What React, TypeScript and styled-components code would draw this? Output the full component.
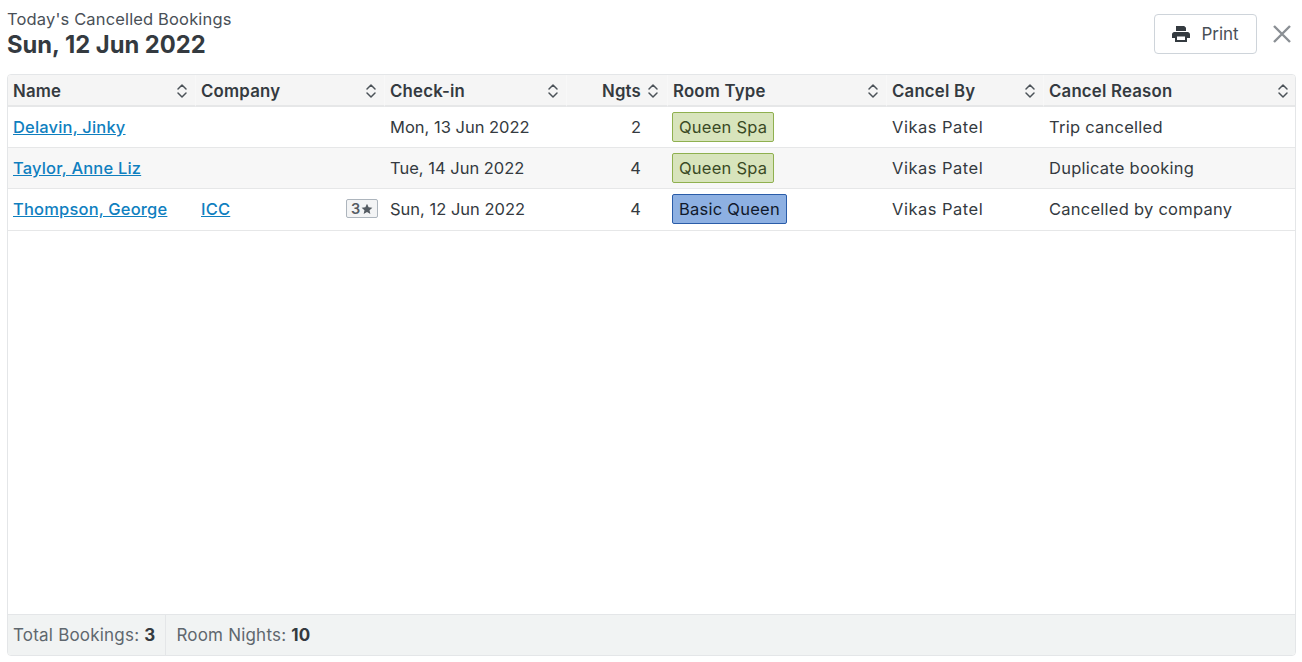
import React from "react";
import styled, { createGlobalStyle } from "styled-components";

const GlobalStyle = createGlobalStyle`
  html, body {
    margin: 0;
    padding: 0;
    background: #fff;
    font-family: Inter, "Liberation Sans", sans-serif;
    color: #343a40;
  }
`;

const Page = styled.div`
  width: 1302px;
  height: 662px;
  box-sizing: border-box;
  padding: 9px 6px 6px 7px;
  display: flex;
  flex-direction: column;
  overflow: hidden;
`;

const Header = styled.header`
  display: flex;
  justify-content: space-between;
  align-items: flex-start;
  height: 65px;
  flex: none;
`;

const Titles = styled.div`
  display: flex;
  flex-direction: column;
`;

const Subtitle = styled.div`
  font-size: 16.5px;
  letter-spacing: 0.15px;
  line-height: 20px;
  color: #495057;
`;

const Title = styled.h1`
  margin: 1px 0 0;
  font-size: 23.75px;
  line-height: 30px;
  font-weight: 700;
  color: #343a40;
`;

const Actions = styled.div`
  display: flex;
  align-items: center;
  gap: 15px;
  margin-top: 5px;
  padding-right: 4px;
`;

const PrintButton = styled.button`
  width: 103px;
  height: 40px;
  display: flex;
  align-items: center;
  justify-content: center;
  gap: 11px;
  background: #fff;
  border: 1px solid #ced4da;
  border-radius: 4px;
  font-family: inherit;
  font-size: 17px;
  color: #495057;
  padding: 0;
`;

const CloseIcon = styled.svg`
  width: 20px;
  height: 20px;
  display: block;
`;

const Panel = styled.section`
  flex: 1;
  display: flex;
  flex-direction: column;
  justify-content: space-between;
  border: 1px solid #e4e6e8;
  border-radius: 4px;
  overflow: hidden;
`;

const Table = styled.table`
  width: 100%;
  table-layout: fixed;
  border-collapse: separate;
  border-spacing: 0;
`;

const HeadCell = styled.th<{ $tight?: boolean }>`
  height: 32px;
  padding: 1px ${(p) => (p.$tight ? 8 : 7)}px 0 5px;
  box-sizing: border-box;
  background: #f5f5f5;
  border-bottom: 2px solid #e6e7e8;
  border-right: 1px solid #f8f8f8;
  text-align: left;
  font-size: 16.8px;
  letter-spacing: 0.2px;
  font-weight: 600;
  color: #343a40;

  &:last-child {
    border-right: 0;
    padding-right: 6px;
  }
`;

const HeadInner = styled.div<{ $right?: boolean }>`
  display: flex;
  align-items: center;
  justify-content: ${(p) => (p.$right ? "flex-end" : "space-between")};
  gap: 6px;
`;

const SortIcon = styled.svg`
  width: 12px;
  height: 18px;
  flex: none;
  display: block;
`;

const Row = styled.tr<{ $striped?: boolean }>`
  background: ${(p) => (p.$striped ? "#f7f7f7" : "#fff")};

  &:last-child td {
    height: 42px;
    padding-bottom: 2px;
  }
`;

const Cell = styled.td<{ $right?: boolean; $pad?: number; $track?: number }>`
  height: 41px;
  box-sizing: border-box;
  padding: 0 ${(p) => p.$pad ?? 7}px 0 5px;
  border-bottom: 1px solid #e6e7e8;
  font-size: 16.5px;
  letter-spacing: ${(p) => p.$track ?? 0}px;
  color: #343a40;
  text-align: ${(p) => (p.$right ? "right" : "left")};
  white-space: nowrap;
`;

const NameLink = styled.a`
  color: #0f7fbf;
  font-weight: 500;
  letter-spacing: 0.18px;
  text-decoration: underline;
`;

const CompanyCell = styled.div`
  display: flex;
  align-items: center;
  justify-content: space-between;
`;

const Stars = styled.span`
  width: 32px;
  height: 19px;
  box-sizing: border-box;
  display: inline-flex;
  align-items: center;
  justify-content: center;
  gap: 1px;
  background: #f3f4f5;
  border: 1px solid #adb5bd;
  border-radius: 2px;
  font-size: 14.5px;
  font-weight: 600;
  color: #555c63;
`;

const StarIcon = styled.svg`
  width: 12px;
  height: 12px;
  display: block;
`;

const RoomTag = styled.span<{ $bg: string; $border: string; $color: string }>`
  display: inline-block;
  box-sizing: border-box;
  height: 30px;
  line-height: 28px;
  margin-left: -1px;
  padding: 0 6px;
  border: 1px solid ${(p) => p.$border};
  border-radius: 2px;
  background: ${(p) => p.$bg};
  color: ${(p) => p.$color};
  vertical-align: middle;
`;

const Footer = styled.footer`
  height: 40px;
  flex: none;
  display: flex;
  background: #f1f3f3;
  border-top: 1px solid #e4e6e8;
`;

const Stat = styled.div`
  display: flex;
  align-items: center;
  gap: 5px;
  padding: 0 10px 0 5px;
  font-size: 17px;
  letter-spacing: 0.2px;
  color: #5f676e;

  & + & {
    border-left: 1px solid #e4e6e8;
    padding-left: 10px;
  }
`;

const StatValue = styled.strong`
  color: #343a40;
  font-weight: 700;
`;

const columns = [
  { label: "Name", width: 188 },
  { label: "Company", width: 189 },
  { label: "Check-in", width: 182 },
  { label: "Ngts", width: 101, right: true },
  { label: "Room Type", width: 219 },
  { label: "Cancel By", width: 157 },
  { label: "Cancel Reason" },
];

const spa = { $bg: "#d8e4bc", $border: "#8fb04f", $color: "#3a4a24" };
const basic = { $bg: "#8db0e2", $border: "#2a5ca8", $color: "#10192b" };

const bookings = [
  { name: "Delavin, Jinky", checkin: "Mon, 13 Jun 2022", nights: 2, room: "Queen Spa", tag: spa, reason: "Trip cancelled" },
  { name: "Taylor, Anne Liz", checkin: "Tue, 14 Jun 2022", nights: 4, room: "Queen Spa", tag: spa, reason: "Duplicate booking" },
  { name: "Thompson, George", company: "ICC", stars: 3, checkin: "Sun, 12 Jun 2022", nights: 4, room: "Basic Queen", tag: basic, reason: "Cancelled by company" },
];

const Sort = () => (
  <SortIcon viewBox="0 0 12 18" fill="none" stroke="#4b5258" strokeWidth="1.5" strokeLinecap="round" strokeLinejoin="round">
    <path d="M2 7l4-4 4 4" />
    <path d="M2 11l4 4 4-4" />
  </SortIcon>
);

export default function App() {
  return (
    <Page>
      <GlobalStyle />
      <Header>
        <Titles>
          <Subtitle>Today's Cancelled Bookings</Subtitle>
          <Title>Sun, 12 Jun 2022</Title>
        </Titles>
        <Actions>
          <PrintButton>
            <svg width="18" height="16" viewBox="0 0 18 16" fill="#343a40">
              <path d="M4 0h8.2L14 1.8V5H4z" />
              <path d="M2.4 6h13.2C16.9 6 18 7.1 18 8.4V12h-3v4H3v-4H0V8.4C0 7.1 1.1 6 2.4 6z" />
              <rect x="5" y="10.5" width="8" height="3.5" fill="#fff" />
            </svg>
            Print
          </PrintButton>
          <CloseIcon viewBox="0 0 20 20" fill="none" stroke="#8a8f94" strokeWidth="2.4">
            <path d="M2 2l16 16M18 2L2 18" />
          </CloseIcon>
        </Actions>
      </Header>
      <Panel>
        <Table>
          <colgroup>
            {columns.map((c) => (
              <col key={c.label} style={c.width ? { width: c.width } : undefined} />
            ))}
          </colgroup>
          <thead>
            <tr>
              {columns.map((c) => (
                <HeadCell key={c.label} $tight={c.right}>
                  <HeadInner $right={c.right}>
                    <span>{c.label}</span>
                    <Sort />
                  </HeadInner>
                </HeadCell>
              ))}
            </tr>
          </thead>
          <tbody>
            {bookings.map((b, i) => (
              <Row key={b.name} $striped={i % 2 === 1}>
                <Cell>
                  <NameLink href="#">{b.name}</NameLink>
                </Cell>
                <Cell>
                  {b.company && (
                    <CompanyCell>
                      <NameLink href="#">{b.company}</NameLink>
                      <Stars>
                        {b.stars}
                        <StarIcon viewBox="0 0 24 24" fill="#555c63">
                          <path d="M12 1.5l3.2 7 7.6.8-5.7 5.1 1.6 7.5-6.7-3.8-6.7 3.8 1.6-7.5L1.2 9.3l7.6-.8z" />
                        </StarIcon>
                      </Stars>
                    </CompanyCell>
                  )}
                </Cell>
                <Cell>{b.checkin}</Cell>
                <Cell $right $pad={27}>
                  {b.nights}
                </Cell>
                <Cell $track={0.25}>
                  <RoomTag {...b.tag}>{b.room}</RoomTag>
                </Cell>
                <Cell $track={0.5}>Vikas Patel</Cell>
                <Cell $track={0.25}>{b.reason}</Cell>
              </Row>
            ))}
          </tbody>
        </Table>
        <Footer>
          <Stat>
            Total Bookings: <StatValue>3</StatValue>
          </Stat>
          <Stat>
            Room Nights: <StatValue>10</StatValue>
          </Stat>
        </Footer>
      </Panel>
    </Page>
  );
}
